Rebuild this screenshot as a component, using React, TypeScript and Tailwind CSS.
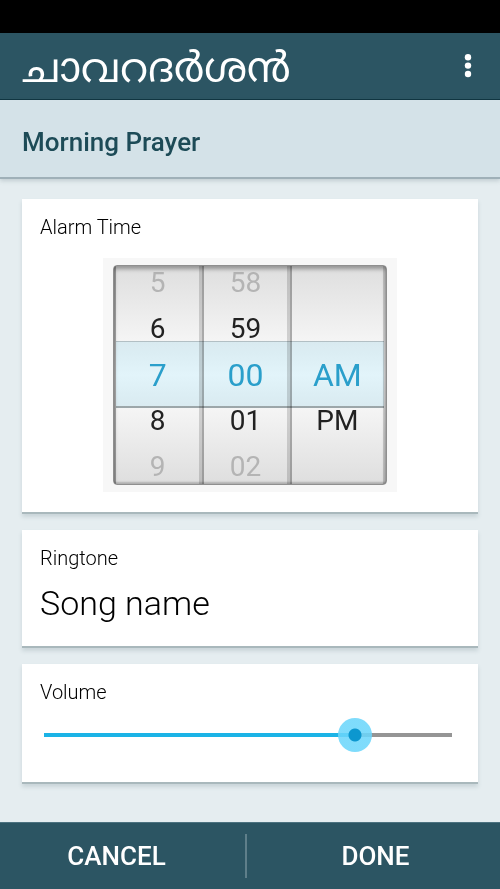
import { useState } from "react"
import clsx from "clsx"

const HOURS = ["1", "2", "3", "4", "5", "6", "7", "8", "9", "10", "11", "12"]
const MINUTES = Array.from({ length: 60 }, (_, i) => String(i).padStart(2, "0"))
const PERIODS = ["AM", "PM"]

const MAX_VOLUME = 14

interface WheelProps {
  label: string
  items: string[]
  value: number
  onChange: (index: number) => void
  wrap?: boolean
}

function Wheel({ label, items, value, onChange, wrap = true }: WheelProps) {
  return (
    <div
      role="group"
      aria-label={label}
      className="flex flex-col justify-center overflow-hidden border-r-3 border-l-2 border-r-black/15 border-l-black/30"
    >
      {[-2, -1, 0, 1, 2].map((offset) => {
        const raw = value + offset
        const index = wrap ? (raw + items.length) % items.length : raw
        const item = items[index]

        if (!item) return <div key={offset} className="h-[46px] shrink-0" />

        return (
          <button
            key={offset}
            type="button"
            aria-pressed={offset === 0}
            onClick={() => onChange(index)}
            className={clsx(
              "h-[46px] shrink-0 leading-none",
              offset === 0 && "text-[32px] text-[#2fa6cf]",
              Math.abs(offset) === 1 && "text-[28px] text-[#222222]",
              Math.abs(offset) === 2 && "text-[28px] text-[#b4b4b4]"
            )}
          >
            {item}
          </button>
        )
      })}
    </div>
  )
}

function Card({ className, children }: { className?: string; children: React.ReactNode }) {
  return (
    <section
      className={clsx(
        "border-b-2 border-[#a9b8bc] bg-white px-[18px] shadow-[0_3px_4px_rgba(90,115,125,0.2)]",
        className
      )}
    >
      {children}
    </section>
  )
}

export default function App() {
  const [hour, setHour] = useState(6)
  const [minute, setMinute] = useState(0)
  const [period, setPeriod] = useState(0)
  const [volume, setVolume] = useState(11)

  const fill = `calc(17px + (100% - 34px) * ${volume / MAX_VOLUME})`

  return (
    <div className="flex min-h-screen flex-col bg-[#e5edf0] font-['Roboto',sans-serif] text-black">
      {/* Status bar */}
      <div className="h-[33px] shrink-0 bg-black" />

      {/* App bar */}
      <header className="flex h-[67px] shrink-0 items-center justify-between border-b border-[#0f3440] bg-[#2c5563] pr-4 pl-[22px]">
        <h1 lang="ml" className="pt-3 font-['Noto_Sans_Malayalam','Noto_Sans',sans-serif] text-[41px] leading-none whitespace-nowrap text-white">
          ചാവറദർശൻ
        </h1>
        <button type="button" aria-label="More options" className="flex h-10 w-8 items-center justify-center text-white">
          <svg viewBox="0 0 8 26" className="h-[26px] w-2" fill="currentColor">
            <circle cx="4" cy="4.2" r="3.2" />
            <circle cx="4" cy="12.6" r="3.2" />
            <circle cx="4" cy="21" r="3.2" />
          </svg>
        </button>
      </header>

      <div className="flex h-[79px] shrink-0 items-center border-b-2 border-[#9fb0b8] bg-[#d4e2e8] px-[22px] pt-2 shadow-[0_2px_4px_rgba(90,115,125,0.25)]">
        <h2 className="text-[26px] font-medium text-[#1d4b57]">Morning Prayer</h2>
      </div>

      <main className="flex flex-1 flex-col gap-4 px-[22px] pt-5 pb-9">
        <Card className="pt-3.5 pb-5">
          <h3 className="text-[20px] leading-7 font-light">Alarm Time</h3>
          <div className="mx-auto mt-[17px] w-[294px] bg-[#f7f7f7] px-[10px] py-[7px]">
            <div className="relative grid h-[220px] grid-cols-[88fr_87fr_96fr] overflow-hidden rounded-sm border border-[#8f8f8f] bg-linear-to-b from-[#dedede] via-[#ffffff] to-[#dedede]">
              <Wheel label="Hour" items={HOURS} value={hour} onChange={setHour} />
              <Wheel label="Minute" items={MINUTES} value={minute} onChange={setMinute} />
              <Wheel label="AM or PM" items={PERIODS} value={period} onChange={setPeriod} wrap={false} />
              {/* Shade under the top and bottom lips */}
              <div className="pointer-events-none absolute inset-0 shadow-[inset_0_3px_4px_rgba(0,0,0,0.35),inset_0_-2px_2px_rgba(0,0,0,0.2)]" />
              {/* Selected row band */}
              <div className="pointer-events-none absolute inset-x-0.5 top-[75px] h-[67px] border-t border-b-2 border-t-[#b9c7cc] border-b-[#a3adb0] bg-[#c5e9f5]/50 mix-blend-multiply" />
            </div>
          </div>
        </Card>

        <Card className="pt-3.5 pb-5">
          <h3 className="text-[20px] leading-7 font-light">Ringtone</h3>
          <button type="button" className="mt-2 block text-[34px] leading-[46px] font-light">
            Song name
          </button>
        </Card>

        <Card className="pt-3.5 pb-[30px]">
          <label htmlFor="volume" className="block text-[20px] leading-7 font-light">
            Volume
          </label>
          <div className="mt-3 pr-2 pl-1">
            <input
              id="volume"
              type="range"
              min={0}
              max={MAX_VOLUME}
              value={volume}
              onChange={(e) => setVolume(Number(e.target.value))}
              style={{ backgroundImage: `linear-gradient(to right, #1bb3e6 ${fill}, #959595 ${fill})` }}
              className="block h-[34px] w-full cursor-pointer appearance-none bg-[length:100%_4px] bg-center bg-no-repeat [&::-webkit-slider-thumb]:size-[34px] [&::-webkit-slider-thumb]:appearance-none [&::-webkit-slider-thumb]:rounded-full [&::-webkit-slider-thumb]:bg-[radial-gradient(circle,#0c97cf_6px,#6bd6fbdd_7px)]"
            />
          </div>
        </Card>
      </main>

      <footer className="grid h-[67px] shrink-0 grid-cols-[247fr_253fr] items-center border-t border-[#4c7280] bg-[#2c5563] text-[26px] font-medium text-white">
        <button type="button" className="h-11 border-r-2 border-[#5f7f8a] pr-3">
          CANCEL
        </button>
        <button type="button" className="h-11 pl-1">
          DONE
        </button>
      </footer>
    </div>
  )
}
